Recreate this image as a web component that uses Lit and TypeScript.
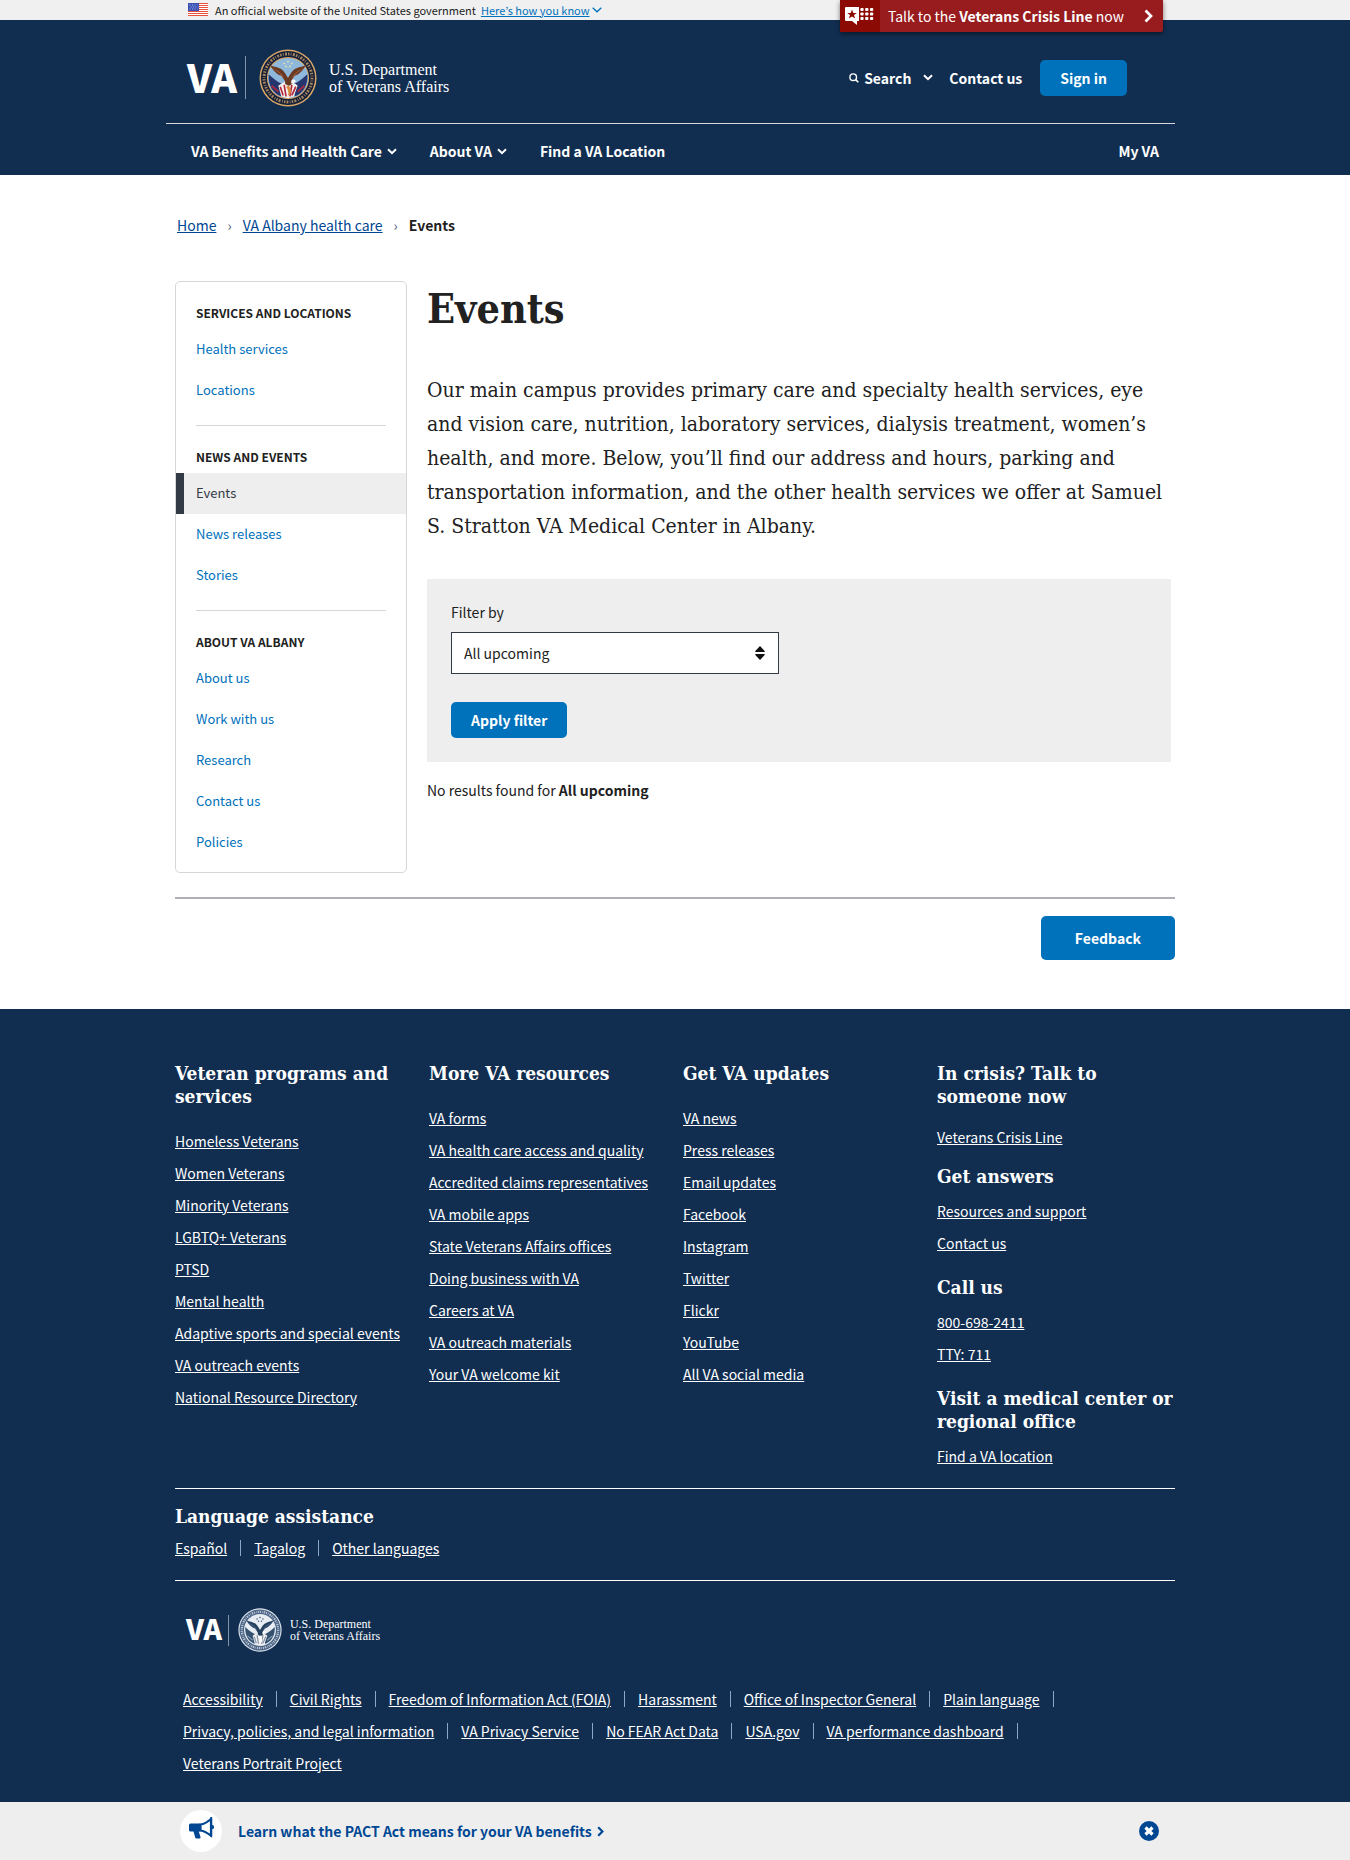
import { LitElement, html, svg, css, nothing } from "lit";
import { customElement, property } from "lit/decorators.js";

type Group = { title: string; items: string[]; current?: string };

const SIDE: Group[] = [
  { title: "Services and locations", items: ["Health services", "Locations"] },
  { title: "News and events", items: ["Events", "News releases", "Stories"], current: "Events" },
  { title: "About VA Albany", items: ["About us", "Work with us", "Research", "Contact us", "Policies"] },
];

const FOOTER: Group[] = [
  {
    title: "Veteran programs and services",
    items: ["Homeless Veterans", "Women Veterans", "Minority Veterans", "LGBTQ+ Veterans", "PTSD", "Mental health",
      "Adaptive sports and special events", "VA outreach events", "National Resource Directory"],
  },
  {
    title: "More VA resources",
    items: ["VA forms", "VA health care access and quality", "Accredited claims representatives", "VA mobile apps",
      "State Veterans Affairs offices", "Doing business with VA", "Careers at VA", "VA outreach materials",
      "Your VA welcome kit"],
  },
  {
    title: "Get VA updates",
    items: ["VA news", "Press releases", "Email updates", "Facebook", "Instagram", "Twitter", "Flickr", "YouTube",
      "All VA social media"],
  },
];

const HELP: Group[] = [
  { title: "In crisis? Talk to someone now", items: ["Veterans Crisis Line"] },
  { title: "Get answers", items: ["Resources and support", "Contact us"] },
  { title: "Call us", items: ["800-698-2411", "TTY: 711"] },
  { title: "Visit a medical center or regional office", items: ["Find a VA location"] },
];

const LANGUAGES = ["Español", "Tagalog", "Other languages"];

const LEGAL = ["Accessibility", "Civil Rights", "Freedom of Information Act (FOIA)", "Harassment",
  "Office of Inspector General", "Plain language", "Privacy, policies, and legal information", "VA Privacy Service",
  "No FEAR Act Data", "USA.gov", "VA performance dashboard", "Veterans Portrait Project"];

const base = css`
  * { box-sizing: border-box; }
  h1, h2, h3, p, ul { margin: 0; padding: 0; }
  ul { list-style: none; }
  svg { display: block; flex: none; }
  a { color: inherit; }
  button { font: inherit; border: 0; cursor: pointer; }
`;

const chevron = html`<svg class="chev" width="10" height="7" viewBox="0 0 10 7" aria-hidden="true">
  <path d="M1 1.2 5 5.2 9 1.2" fill="none" stroke="currentColor" stroke-width="2"></path></svg>`;

@customElement("va-seal")
export class VaSeal extends LitElement {
  @property({ type: Boolean }) mono = false;

  static styles = css`
    :host { display: block; }
    svg { display: block; width: 100%; height: 100%; }
  `;

  render() {
    const m = this.mono;
    const gold = m ? "#dfe6ee" : "#d9a766";
    const ring = m ? "#4a6384" : "#14203c";
    const sky = m ? "#e8edf3" : "#8fb9dc";
    const wing = m ? "#24405f" : "#6b3a22";
    const wingHi = m ? "#4a6384" : "#94583a";
    const blue = m ? "#355170" : "#25366e";
    const red = m ? "#8496ad" : "#b5263c";
    return html`<svg viewBox="0 0 60 60" aria-hidden="true">
      <circle cx="30" cy="30" r="29.5" fill=${gold}></circle>
      <circle cx="30" cy="30" r="28" fill=${ring}></circle>
      <circle cx="30" cy="30" r="24.8" fill="none" stroke=${gold} stroke-width="3"
        stroke-dasharray="1.5 1.3 .8 1.5 2 1.2" opacity=".75"></circle>
      <circle cx="30" cy="30" r="21.8" fill=${gold}></circle>
      <circle cx="30" cy="30" r="20.8" fill=${sky}></circle>
      <path d="M10 26c4 4 9 8 14 10l-1 13C15 46 9 38 10 26zM50 26c-4 4-9 8-14 10l1 13c8-3 14-11 13-23z" fill=${blue}></path>
      <path d="M20 38c4-3 7-4 10-4s7 1 10 4l-4 11-6 2-7-2z" fill="#f4f1ee"></path>
      <path d="M22 39l3 9M26 37l2 12M34 37l-2 12M38 39l-4 9M13 38l7 6M47 38l-7 6" stroke=${red} stroke-width="1.7"></path>
      <path d="M30 36c-3-2-5-5-6-8C19 27 14 22 11 16c4 3 7 2 10 4 4 1 6 5 9 10 3-5 5-9 9-10 3-2 6-1 10-4-3 6-8 11-13 12-1 3-3 6-6 8z" fill=${wing}></path>
      <path d="M14 20c4 3 8 4 11 9M46 20c-4 3-8 4-11 9M18 22c3 2 5 4 7 8M42 22c-3 2-5 4-7 8" stroke=${wingHi} fill="none"></path>
      <path d="M27 33c2-3 4-3 7 0l3 1-3 2c-2 3-5 2-7 0z" fill=${wing}></path>
      <path d="M34 32c2-1 4 0 4 2l-4 2c-1-1-1-3 0-4z" fill="#fff"></path>
      <path d="M28 39c2 3 3 5 2 9l2-1c2-3 1-6-1-9z" fill=${m ? "#fff" : "#d98a3c"}></path>
      ${[[30, 13], [26, 15], [34, 15], [28, 18], [32, 18]].map(
        ([x, y]) => svg`<circle cx=${x} cy=${y} r=".9" fill=${m ? "#24405f" : "#f3e3a0"}></circle>`,
      )}
    </svg>`;
  }
}

@customElement("va-logo")
export class VaLogo extends LitElement {
  @property({ type: Boolean, reflect: true }) small = false;

  static styles = [base, css`
    :host { display: block; color: #fff; }
    .logo { display: flex; align-items: center; text-decoration: none; }
    .mark { font: 900 39px/40px "Noto Sans CJK KR", "Open Sans", sans-serif; padding-bottom: 4px; }
    .rule { width: 1px; height: 43px; background: #8294ab; margin: 0 13px 0 8px; }
    .seal { width: 58px; height: 58px; flex: none; }
    .dept { font: 16px/17px "Liberation Serif", serif; margin-left: 12px; white-space: nowrap; }
    :host([small]) .mark { font-size: 28px; }
    :host([small]) .rule { height: 31px; margin: 0 9px 0 6px; }
    :host([small]) .seal { width: 44px; height: 44px; }
    :host([small]) .dept { font-size: 12px; line-height: 12px; margin-left: 8px; }
  `];

  render() {
    return html`<a class="logo" href="#home">
      <span class="mark">VA</span><span class="rule"></span>
      <va-seal class="seal" ?mono=${this.small}></va-seal>
      <span class="dept">U.S. Department<br>of Veterans Affairs</span>
    </a>`;
  }
}

@customElement("va-header")
export class VaHeader extends LitElement {
  static styles = [base, css`
    :host { display: block; }
    .gov { background: #f0f0f0; color: #212121; }
    .wrap { max-width: 1000px; margin: 0 auto; }
    .gov .wrap { display: flex; align-items: center; height: 20px; padding: 0 0 1px 13px; font-size: 11px; line-height: 18px; }
    .gov p { margin: 0 5px 0 7px; }
    .gov a { color: #0071bb; display: flex; align-items: center; gap: 2px; }
    .crisis {
      position: absolute; top: 0; right: max(12px, calc(50% - 488px)); display: flex; align-items: center;
      height: 32px; background: #981b1e; color: #fff; text-decoration: none; border-radius: 0 0 2px 2px;
      box-shadow: 0 2px 5px rgba(0, 0, 0, .5); font-size: 14px; line-height: 32px; padding-right: 10px;
    }
    .chat { background: #8b0a03; width: 40px; height: 32px; display: grid; place-items: center; margin-right: 8px; }
    .crisis .arrow { margin-left: 20px; }
    .bar { background: #112e51; color: #fff; font-weight: 700; font-size: 14px; }
    .top { display: flex; align-items: center; justify-content: space-between; height: 103px; padding: 12px 48px 0 12px; }
    .tools { display: flex; align-items: center; }
    .plain { background: none; color: #fff; padding: 0; display: flex; align-items: center; gap: 5px; }
    .tools .chev { margin-left: 7px; }
    .tools a { text-decoration: none; margin: 0 18px 0 16px; }
    .signin { background: #0071bb; color: #fff; border-radius: 5px; height: 36px; padding: 0 20px; }
    nav { max-width: 1009px; margin: 0 auto; padding: 0 7px 0 25px; border-top: 1px solid #d6d7d9; height: 52px; }
    .menu { display: flex; align-items: center; gap: 33px; height: 54px; }
    .menu a { text-decoration: none; }
    .menu .end { margin-left: auto; padding-right: 9px; }
    .navwrap { max-width: 1018px; margin: 0 auto; padding-right: 9px; }
  `];

  render() {
    return html`
      <div class="gov"><div class="wrap">
        <svg width="20" height="13" viewBox="0 0 20 13" aria-hidden="true">
          <rect width="20" height="13" fill="#fff"></rect>
          <path d="M0 .5h20M0 2.5h20M0 4.5h20M0 6.5h20M0 8.5h20M0 10.5h20M0 12.5h20" stroke="#e8513d"></path>
          <rect width="11" height="8" fill="#3a4fb4"></rect>
          <path d="M1.5 2h8M2.5 4h8M1.5 6h8" stroke="#c3cbf0" stroke-width=".9" stroke-dasharray="1 1.5"></path>
        </svg>
        <p>An official website of the United States government</p>
        <a href="#how"><span>Here’s how you know</span>
          <svg width="10" height="6" viewBox="0 0 10 6" aria-hidden="true">
            <path d="M.7.7 5 4.8 9.3.7" fill="none" stroke="#0071bb" stroke-width="1.3"></path></svg></a>
      </div></div>
      <a class="crisis" href="#crisis">
        <span class="chat"><svg width="29" height="18" viewBox="0 0 29 18" aria-hidden="true">
          <path d="M1 0h13v14h-2v4l-5-4H1a1 1 0 0 1-1-1V1a1 1 0 0 1 1-1z" fill="#fff"></path>
          <path d="M7 2.6 8.3 6h3.5L9 8.1l1.1 3.4L7 9.4l-3.1 2.1L5 8.1 2.2 6h3.5z" fill="#8b0a03"></path>
          ${[2.5, 7, 11.5].map((y) => [17, 21.8, 26.6].map(
            (x) => svg`<rect x=${x - 1.6} y=${y - 1.5} width="3.2" height="3" rx=".8" fill="#fff"></rect>`))}
        </svg></span>
        <span>Talk to the <b>Veterans Crisis Line</b> now</span>
        <svg class="arrow" width="9" height="14" viewBox="0 0 9 14" aria-hidden="true">
          <path d="M1.5 1.5 7 7l-5.5 5.5" fill="none" stroke="#fff" stroke-width="2.7"></path></svg>
      </a>
      <header class="bar">
        <div class="wrap top">
          <va-logo></va-logo>
          <div class="tools">
            <button class="plain" type="button">
              <svg width="10" height="10" viewBox="0 0 10 10" aria-hidden="true">
                <circle cx="4.2" cy="4.2" r="3.3" fill="none" stroke="#fff" stroke-width="1.4"></circle>
                <path d="m6.6 6.6 2.7 2.7" stroke="#fff" stroke-width="1.6"></path></svg>
              <span>Search</span>${chevron}
            </button>
            <a href="#contact">Contact us</a>
            <button class="signin" type="button">Sign in</button>
          </div>
        </div>
        <div class="navwrap"><nav><div class="menu">
          <button class="plain" type="button">VA Benefits and Health Care ${chevron}</button>
          <button class="plain" type="button">About VA ${chevron}</button>
          <a href="#find">Find a VA Location</a>
          <a class="end" href="#my">My VA</a>
        </div></nav></div>
      </header>`;
  }
}

@customElement("va-sidebar")
export class VaSidebar extends LitElement {
  static styles = [base, css`
    :host { display: block; }
    nav { border: 1px solid #d6d7d9; border-radius: 5px; padding-bottom: 9px; }
    h2 { font-size: 12px; line-height: 16px; padding: 23px 20px 8px; text-transform: uppercase; color: #212121; }
    li a { display: block; padding: 0 20px 2px; font-size: 13px; line-height: 39px; color: #0071bb; text-decoration: none; }
    li a.current { background: #eee; color: #323a45; border-left: 8px solid #323a45; padding-left: 12px; }
    hr { margin: 14px 20px 0; border: 0; height: 1px; background: #d6d7d9; }
  `];

  render() {
    return html`<nav aria-label="Albany health care">
      ${SIDE.map((g, i) => html`
        ${i ? html`<hr>` : nothing}
        <h2>${g.title}</h2>
        <ul>${g.items.map((t) => html`<li><a href="#page" class=${t === g.current ? "current" : ""}>${t}</a></li>`)}</ul>`)}
    </nav>`;
  }
}

@customElement("va-footer")
export class VaFooter extends LitElement {
  static styles = [base, css`
    :host { display: block; background: #112e51; color: #fff; font-size: 14px; line-height: 24px; }
    .wrap { max-width: 1000px; margin: 0 auto; padding: 53px 0 27px; }
    .cols { display: grid; grid-template-columns: repeat(4, 1fr); gap: 16px; padding-bottom: 20px; border-bottom: 1px solid #fff; }
    h2 { font: 700 19px/23px "DejaVu Serif Condensed", "DejaVu Serif", serif; }
    .col ul { margin-top: 21px; }
    .col li { margin-bottom: 8px; }
    li { line-height: 24px; }
    .help h2 { margin-top: 21px; }
    .help h2.first { margin-top: 0; }
    .help ul { margin-top: 11px; }
    .help h2.first + ul { margin-top: 17px; }
    .help h2.first + ul + h2 { margin-top: 16px; }
    .help li + li { margin-top: 8px; }
    .langs { padding: 16px 0 20px; border-bottom: 1px solid #fff; }
    .langs ul { margin-top: 8px; }
    .row { display: flex; flex-wrap: wrap; row-gap: 8px; }
    .row li { display: flex; align-items: center; }
    .row li:not(:last-child)::after { content: ""; width: 1px; height: 16px; margin: 0 13px; background: #8ba6ca; }
    .brand { padding: 27px 11px 35px; display: flex; }
    .legal { padding: 0 8px; }
  `];

  render() {
    const list = (items: string[]) => items.map((t) => html`<li><a href="#page">${t}</a></li>`);
    return html`<footer class="wrap">
      <div class="cols">
        ${FOOTER.map((g) => html`<section class="col"><h2>${g.title}</h2><ul>${list(g.items)}</ul></section>`)}
        <section class="help">
          ${HELP.map((g, i) => html`<h2 class=${i ? "" : "first"}>${g.title}</h2><ul>${list(g.items)}</ul>`)}
        </section>
      </div>
      <section class="langs"><h2>Language assistance</h2><ul class="row">${list(LANGUAGES)}</ul></section>
      <div class="brand"><va-logo small></va-logo></div>
      <ul class="row legal">${list(LEGAL)}</ul>
    </footer>`;
  }
}

@customElement("app-root")
export class AppRoot extends LitElement {
  static styles = [base, css`
    :host {
      display: block; position: relative; min-height: 100vh; background: #fff; color: #212121;
      font: 14px/24px "Noto Sans CJK KR", "Open Sans", sans-serif;
    }
    .wrap { max-width: 1000px; margin: 0 auto; }
    .crumbs { display: flex; align-items: center; padding: 38px 2px 44px; }
    .crumbs a { color: #004793; }
    .crumbs i { font-style: normal; color: #4b5a75; margin: 0 11px; }
    .body { display: grid; grid-template-columns: 232px 1fr; gap: 20px; align-items: start; padding-right: 4px; }
    h1, .intro { font-family: "DejaVu Serif Condensed", "DejaVu Serif", serif; }
    h1 { font-size: 41px; line-height: 52px; margin: 2px 0 38px; }
    .intro { font-size: 21px; line-height: 34px; margin-bottom: 36px; }
    .filter { background: #eee; padding: 21px 24px 24px; }
    .filter label { display: block; margin-bottom: 8px; }
    .pick { position: relative; max-width: 328px; margin-bottom: 28px; }
    select {
      appearance: none; display: block; width: 100%; height: 42px; border: 1px solid #323a45; border-radius: 0;
      background: #fff; color: #212121; font: inherit; padding: 0 40px 0 12px;
    }
    .pick svg { position: absolute; right: 14px; top: 14px; pointer-events: none; }
    .primary { display: block; background: #0071bb; color: #fff; font-weight: 700; border-radius: 5px; height: 36px; padding: 0 20px; }
    .result { margin-top: 16px; }
    .tail { margin-top: 24px; border-top: 2px solid #aeb0b5; padding: 17px 0 49px; display: flex; justify-content: flex-end; }
    .feedback { height: 44px; padding: 0 34px; }
    .promo { background: #eee; color: #004793; font-weight: 700; }
    .promo .wrap { display: flex; align-items: center; height: 58px; padding: 0 16px 0 5px; }
    .horn { width: 42px; height: 42px; border-radius: 50%; background: #fff; display: grid; place-items: center; margin-right: 16px; padding-bottom: 6px; }
    .promo a { text-decoration: none; display: flex; align-items: center; gap: 5px; }
    .close { margin-left: auto; background: none; padding: 0; }
  `];

  render() {
    return html`
      <va-header></va-header>
      <div class="wrap">
        <nav class="crumbs" aria-label="Breadcrumb">
          <a href="#home">Home</a><i>›</i><a href="#albany">VA Albany health care</a><i>›</i><b>Events</b>
        </nav>
        <div class="body">
          <va-sidebar></va-sidebar>
          <main>
            <h1>Events</h1>
            <p class="intro">Our main campus provides primary care and specialty health services, eye
              and vision care, nutrition, laboratory services, dialysis treatment, women’s
              health, and more. Below, you’ll find our address and hours, parking and
              transportation information, and the other health services we offer at Samuel
              S. Stratton VA Medical Center in Albany.</p>
            <form class="filter" @submit=${(e: Event) => e.preventDefault()}>
              <label for="when">Filter by</label>
              <div class="pick">
                <select id="when"><option>All upcoming</option></select>
                <svg width="10" height="14" viewBox="0 0 10 14" aria-hidden="true">
                  <path d="M5 0 9.7 5q.3 1-.7 1H1Q0 6 .3 5zM5 14 .3 9Q0 8 1 8h8q1 0 .7 1z" fill="#111"></path></svg>
              </div>
              <button class="primary" type="submit">Apply filter</button>
            </form>
            <p class="result">No results found for <b>All upcoming</b></p>
          </main>
        </div>
        <div class="tail"><button class="primary feedback" type="button">Feedback</button></div>
      </div>
      <va-footer></va-footer>
      <aside class="promo"><div class="wrap">
        <span class="horn"><svg width="25" height="22" viewBox="0 0 25 22" aria-hidden="true">
          <path d="M1.5 6.5h10v8H9.8l1.7 5.5q.2 1.5-1 1.5h-3q-1 0-1.3-1l-1.7-6h-3Q0 14.5 0 13V8q0-1.5 1.5-1.5z" fill="#004793"></path>
          <path d="M11.5 7.5C15.5 7 18.5 5 22 2v16.5c-3.5-2.5-6.5-4.500-10.500-5z" fill="none" stroke="#004793" stroke-width="2.2"></path>
          <rect x="21" y="0" width="2.2" height="20" rx="1" fill="#004793"></rect>
          <rect x="22" y="8" width="3" height="4" rx="1.5" fill="#004793"></rect>
        </svg></span>
        <a href="#pact">Learn what the PACT Act means for your VA benefits
          <svg width="7" height="11" viewBox="0 0 7 11" aria-hidden="true">
            <path d="M1.2 1.2 5.4 5.5 1.2 9.8" fill="none" stroke="#004793" stroke-width="2.2"></path></svg></a>
        <button class="close" type="button" aria-label="Close">
          <svg width="20" height="20" viewBox="0 0 20 20" aria-hidden="true">
            <circle cx="10" cy="10" r="10" fill="#004793"></circle>
            <path d="m6.5 6.5 7 7m0-7-7 7" stroke="#fff" stroke-width="3.2"></path></svg>
        </button>
      </div></aside>`;
  }
}
